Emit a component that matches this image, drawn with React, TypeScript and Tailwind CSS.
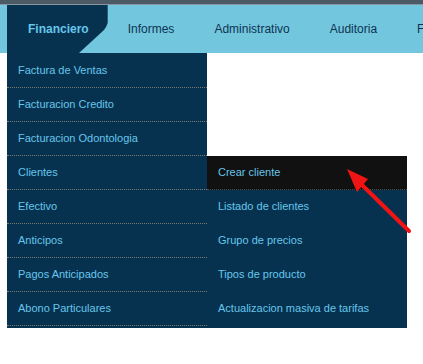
import React from "react";

const left = [
  "Factura de Ventas",
  "Facturacion Credito",
  "Facturacion Odontologia",
  "Clientes",
  "Efectivo",
  "Anticipos",
  "Pagos Anticipados",
  "Abono Particulares",
];

const sub = [
  "Crear cliente",
  "Listado de clientes",
  "Grupo de precios",
  "Tipos de producto",
  "Actualizacion masiva de tarifas",
];

export default function App() {
  return (
    <div
      className="relative w-[423px] h-[364px] bg-white overflow-hidden"
      style={{ fontFamily: '"Liberation Sans", Arial, sans-serif' }}
    >
      <div className="h-[4px] bg-[#4b5a64]" />
      <div className="h-px bg-[#8796a0]" />
      <nav className="flex h-[48px] bg-[#72c7df] pl-[7px] text-[12px] whitespace-nowrap">
        <div className="flex items-center pl-[21px] pr-[19px] bg-[#07324f] text-[#66c6ec] font-bold [clip-path:polygon(0_0,100%_0,100%_18px,99px_22px,97px_25px,72px_48px,0_48px)]">
          Financiero
        </div>
        <div className="flex items-center px-5 text-[#0e3350]">Informes</div>
        <div className="flex items-center px-5 text-[#0e3350]">Administrativo</div>
        <div className="flex items-center px-5 text-[#0e3350]">Auditoria</div>
        <div className="flex items-center px-5 text-[#0e3350]">Facturacion</div>
      </nav>
      <ul className="ml-[7px] w-[200px] bg-[#07324f] pt-px pb-[2px] text-[11px] text-[#66c6ec]">
        {left.map((t) => (
          <li
            key={t}
            className="relative h-[34px] border-b border-dotted border-[#7d7b70] flex items-center pl-[11px]"
          >
            {t}
            {t === "Clientes" && (
              <ul className="absolute left-full top-0 w-[200px] bg-[#07324f] pb-[2px]">
                {sub.map((s, i) => (
                  <li
                    key={s}
                    className={
                      "h-[34px] flex items-center pl-[11px] border-b border-dotted " +
                      (i === 0
                        ? "bg-[#111111] border-[#4a4a48]"
                        : "border-[#07324f]")
                    }
                  >
                    {s}
                  </li>
                ))}
              </ul>
            )}
          </li>
        ))}
      </ul>
      <svg
        className="absolute left-0 top-0"
        width="423"
        height="364"
        viewBox="0 0 423 364"
      >
        <line
          x1="409"
          y1="231"
          x2="360"
          y2="183"
          stroke="#f01414"
          strokeWidth="4"
          strokeLinecap="round"
        />
        <polygon points="347,169 368,179 357,192" fill="#f01414" />
      </svg>
    </div>
  );
}
